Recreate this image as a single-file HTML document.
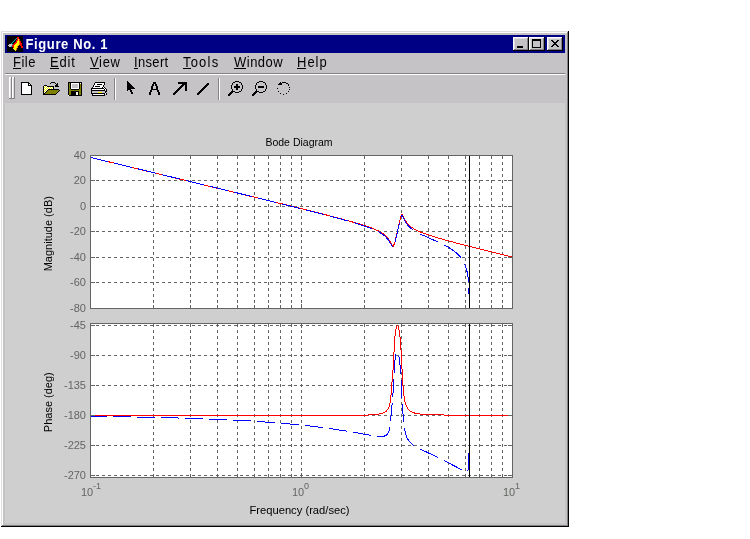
<!DOCTYPE html>
<html><head><meta charset="utf-8"><style>
html,body{margin:0;padding:0;background:#fff;width:750px;height:539px;overflow:hidden}
svg{position:absolute;left:0;top:0;will-change:transform}
text{font-family:"Liberation Sans",sans-serif}
</style></head><body>
<svg width="750" height="539" viewBox="0 0 750 539">
<g shape-rendering="crispEdges"><rect x="1" y="31" width="568" height="496" fill="#c6c3c6"/><rect x="2" y="32" width="566" height="1" fill="#ffffff"/><rect x="2" y="32" width="1" height="494" fill="#ffffff"/><rect x="1" y="31" width="567" height="1" fill="#dedfde"/><rect x="1" y="31" width="1" height="495" fill="#dedfde"/><rect x="2" y="525" width="566" height="1" fill="#848284"/><rect x="567" y="32" width="1" height="494" fill="#848284"/><rect x="1" y="526" width="568" height="1" fill="#000000"/><rect x="568" y="31" width="1" height="496" fill="#000000"/><rect x="5" y="35" width="560" height="18" fill="#000084"/><rect x="5" y="103" width="560" height="420" fill="#cecfce"/><rect x="5" y="73" width="560" height="1" fill="#848284"/><rect x="5" y="74" width="560" height="1" fill="#ffffff"/><rect x="7" y="36" width="16" height="16" fill="#000"/><rect x="17" y="37" width="2" height="1" fill="#ff0000"/><rect x="16" y="38" width="1" height="1" fill="#00a8a8"/><rect x="17" y="38" width="2" height="1" fill="#ff0000"/><rect x="15" y="39" width="1" height="1" fill="#00a8a8"/><rect x="17" y="39" width="1" height="1" fill="#ff0000"/><rect x="18" y="39" width="1" height="1" fill="#ffff00"/><rect x="19" y="39" width="1" height="1" fill="#ff0000"/><rect x="14" y="40" width="1" height="1" fill="#00a8a8"/><rect x="16" y="40" width="2" height="1" fill="#ff0000"/><rect x="18" y="40" width="1" height="1" fill="#ffff00"/><rect x="19" y="40" width="1" height="1" fill="#ff0000"/><rect x="13" y="41" width="1" height="1" fill="#00a8a8"/><rect x="16" y="41" width="1" height="1" fill="#ff0000"/><rect x="17" y="41" width="2" height="1" fill="#ffff00"/><rect x="19" y="41" width="1" height="1" fill="#ff8000"/><rect x="20" y="41" width="1" height="1" fill="#ff0000"/><rect x="12" y="42" width="1" height="1" fill="#00a8a8"/><rect x="15" y="42" width="2" height="1" fill="#ff0000"/><rect x="17" y="42" width="2" height="1" fill="#ffff00"/><rect x="19" y="42" width="1" height="1" fill="#ff8000"/><rect x="20" y="42" width="1" height="1" fill="#ff0000"/><rect x="11" y="43" width="1" height="1" fill="#00a8a8"/><rect x="14" y="43" width="2" height="1" fill="#ff0000"/><rect x="16" y="43" width="3" height="1" fill="#ffff00"/><rect x="19" y="43" width="1" height="1" fill="#ff8000"/><rect x="20" y="43" width="2" height="1" fill="#ff0000"/><rect x="9" y="44" width="3" height="1" fill="#c6c3c6"/><rect x="12" y="44" width="1" height="1" fill="#00a8a8"/><rect x="13" y="44" width="2" height="1" fill="#ff0000"/><rect x="15" y="44" width="4" height="1" fill="#ffff00"/><rect x="19" y="44" width="1" height="1" fill="#ff8000"/><rect x="20" y="44" width="2" height="1" fill="#ff0000"/><rect x="8" y="45" width="4" height="1" fill="#c6c3c6"/><rect x="12" y="45" width="2" height="1" fill="#ff0000"/><rect x="14" y="45" width="4" height="1" fill="#ffff00"/><rect x="18" y="45" width="1" height="1" fill="#ff8000"/><rect x="20" y="45" width="2" height="1" fill="#ff0000"/><rect x="9" y="46" width="2" height="1" fill="#c6c3c6"/><rect x="11" y="46" width="1" height="1" fill="#00a8a8"/><rect x="12" y="46" width="2" height="1" fill="#ff0000"/><rect x="14" y="46" width="3" height="1" fill="#ffff00"/><rect x="17" y="46" width="1" height="1" fill="#ff8000"/><rect x="21" y="46" width="2" height="1" fill="#ff0000"/><rect x="13" y="47" width="1" height="1" fill="#ff0000"/><rect x="14" y="47" width="3" height="1" fill="#ffff00"/><rect x="17" y="47" width="1" height="1" fill="#ff8000"/><rect x="21" y="47" width="2" height="1" fill="#ff0000"/><rect x="13" y="48" width="3" height="1" fill="#ffff00"/><rect x="16" y="48" width="1" height="1" fill="#ff8000"/><rect x="14" y="49" width="2" height="1" fill="#ffff00"/><rect x="16" y="49" width="1" height="1" fill="#ff8000"/><rect x="15" y="50" width="1" height="1" fill="#ffff00"/><text transform="translate(25.5,49) scale(1,1.06)" font-size="13" font-weight="bold" fill="#fff" letter-spacing="0.63">Figure No. 1</text><rect x="513" y="37" width="16" height="14" fill="#000"/><rect x="513" y="37" width="15" height="13" fill="#fff"/><rect x="514" y="38" width="14" height="12" fill="#848284"/><rect x="514" y="38" width="13" height="11" fill="#dedfde"/><rect x="515" y="39" width="12" height="10" fill="#c6c3c6"/><rect x="529" y="37" width="16" height="14" fill="#000"/><rect x="529" y="37" width="15" height="13" fill="#fff"/><rect x="530" y="38" width="14" height="12" fill="#848284"/><rect x="530" y="38" width="13" height="11" fill="#dedfde"/><rect x="531" y="39" width="12" height="10" fill="#c6c3c6"/><rect x="547" y="37" width="16" height="14" fill="#000"/><rect x="547" y="37" width="15" height="13" fill="#fff"/><rect x="548" y="38" width="14" height="12" fill="#848284"/><rect x="548" y="38" width="13" height="11" fill="#dedfde"/><rect x="549" y="39" width="12" height="10" fill="#c6c3c6"/><rect x="517" y="46" width="6" height="2" fill="#000"/><rect x="532" y="39" width="9" height="9" fill="#000"/><rect x="533" y="41" width="7" height="6" fill="#c6c3c6"/><rect x="551" y="40" width="2" height="1" fill="#000"/><rect x="557" y="40" width="2" height="1" fill="#000"/><rect x="552" y="41" width="2" height="1" fill="#000"/><rect x="556" y="41" width="2" height="1" fill="#000"/><rect x="553" y="42" width="4" height="1" fill="#000"/><rect x="554" y="43" width="2" height="1" fill="#000"/><rect x="553" y="44" width="4" height="1" fill="#000"/><rect x="552" y="45" width="2" height="1" fill="#000"/><rect x="556" y="45" width="2" height="1" fill="#000"/><rect x="551" y="46" width="2" height="1" fill="#000"/><rect x="557" y="46" width="2" height="1" fill="#000"/><text transform="translate(13,67) scale(1,1.1)" font-size="13" fill="#000" letter-spacing="0.5">File</text><rect x="13" y="68" width="8" height="1" fill="#000"/><text transform="translate(50,67) scale(1,1.1)" font-size="13" fill="#000" letter-spacing="0.8">Edit</text><rect x="50" y="68" width="9" height="1" fill="#000"/><text transform="translate(90,67) scale(1,1.1)" font-size="13" fill="#000" letter-spacing="0.67">View</text><rect x="90" y="68" width="9" height="1" fill="#000"/><text transform="translate(134,67) scale(1,1.1)" font-size="13" fill="#000" letter-spacing="0.34">Insert</text><rect x="134" y="68" width="4" height="1" fill="#000"/><text transform="translate(183,67) scale(1,1.1)" font-size="13" fill="#000" letter-spacing="1.2">Tools</text><rect x="183" y="68" width="8" height="1" fill="#000"/><text transform="translate(234,67) scale(1,1.1)" font-size="13" fill="#000" letter-spacing="0.5">Window</text><rect x="234" y="68" width="12" height="1" fill="#000"/><text transform="translate(297,67) scale(1,1.1)" font-size="13" fill="#000" letter-spacing="1.0">Help</text><rect x="297" y="68" width="9" height="1" fill="#000"/><rect x="9" y="77" width="3" height="22" fill="#848284"/><rect x="9" y="77" width="2" height="21" fill="#fff"/><rect x="10" y="78" width="1" height="20" fill="#dedfde"/><rect x="12" y="77" width="3" height="22" fill="#848284"/><rect x="12" y="77" width="2" height="21" fill="#fff"/><rect x="13" y="78" width="1" height="20" fill="#dedfde"/><rect x="114" y="78" width="1" height="22" fill="#848284"/><rect x="115" y="78" width="1" height="22" fill="#fff"/><rect x="218" y="78" width="1" height="22" fill="#848284"/><rect x="219" y="78" width="1" height="22" fill="#fff"/><rect x="21" y="82" width="8" height="1" fill="#000"/><rect x="21" y="83" width="1" height="1" fill="#000"/><rect x="22" y="83" width="6" height="1" fill="#fff"/><rect x="28" y="83" width="2" height="1" fill="#000"/><rect x="21" y="84" width="1" height="1" fill="#000"/><rect x="22" y="84" width="6" height="1" fill="#fff"/><rect x="28" y="84" width="1" height="1" fill="#000"/><rect x="29" y="84" width="1" height="1" fill="#fff"/><rect x="30" y="84" width="1" height="1" fill="#000"/><rect x="21" y="85" width="1" height="1" fill="#000"/><rect x="22" y="85" width="6" height="1" fill="#fff"/><rect x="28" y="85" width="4" height="1" fill="#000"/><rect x="21" y="86" width="1" height="1" fill="#000"/><rect x="22" y="86" width="9" height="1" fill="#fff"/><rect x="31" y="86" width="1" height="1" fill="#000"/><rect x="21" y="87" width="1" height="1" fill="#000"/><rect x="22" y="87" width="9" height="1" fill="#fff"/><rect x="31" y="87" width="1" height="1" fill="#000"/><rect x="21" y="88" width="1" height="1" fill="#000"/><rect x="22" y="88" width="9" height="1" fill="#fff"/><rect x="31" y="88" width="1" height="1" fill="#000"/><rect x="21" y="89" width="1" height="1" fill="#000"/><rect x="22" y="89" width="9" height="1" fill="#fff"/><rect x="31" y="89" width="1" height="1" fill="#000"/><rect x="21" y="90" width="1" height="1" fill="#000"/><rect x="22" y="90" width="9" height="1" fill="#fff"/><rect x="31" y="90" width="1" height="1" fill="#000"/><rect x="21" y="91" width="1" height="1" fill="#000"/><rect x="22" y="91" width="9" height="1" fill="#fff"/><rect x="31" y="91" width="1" height="1" fill="#000"/><rect x="21" y="92" width="1" height="1" fill="#000"/><rect x="22" y="92" width="9" height="1" fill="#fff"/><rect x="31" y="92" width="1" height="1" fill="#000"/><rect x="21" y="93" width="1" height="1" fill="#000"/><rect x="22" y="93" width="9" height="1" fill="#fff"/><rect x="31" y="93" width="1" height="1" fill="#000"/><rect x="21" y="94" width="11" height="1" fill="#000"/><rect x="51" y="82" width="4" height="1" fill="#000"/><rect x="50" y="83" width="1" height="1" fill="#000"/><rect x="55" y="83" width="1" height="1" fill="#000"/><rect x="57" y="83" width="1" height="1" fill="#000"/><rect x="56" y="84" width="2" height="1" fill="#000"/><rect x="44" y="85" width="3" height="1" fill="#000"/><rect x="55" y="85" width="3" height="1" fill="#000"/><rect x="43" y="86" width="1" height="1" fill="#000"/><rect x="44" y="86" width="1" height="1" fill="#fff"/><rect x="45" y="86" width="1" height="1" fill="#ffff00"/><rect x="46" y="86" width="1" height="1" fill="#fff"/><rect x="47" y="86" width="7" height="1" fill="#000"/><rect x="55" y="86" width="4" height="1" fill="#000"/><rect x="43" y="87" width="1" height="1" fill="#000"/><rect x="44" y="87" width="1" height="1" fill="#ffff00"/><rect x="45" y="87" width="1" height="1" fill="#fff"/><rect x="46" y="87" width="1" height="1" fill="#ffff00"/><rect x="47" y="87" width="1" height="1" fill="#fff"/><rect x="48" y="87" width="1" height="1" fill="#ffff00"/><rect x="49" y="87" width="1" height="1" fill="#fff"/><rect x="50" y="87" width="1" height="1" fill="#ffff00"/><rect x="51" y="87" width="1" height="1" fill="#fff"/><rect x="52" y="87" width="1" height="1" fill="#ffff00"/><rect x="53" y="87" width="1" height="1" fill="#000"/><rect x="43" y="88" width="1" height="1" fill="#000"/><rect x="44" y="88" width="1" height="1" fill="#fff"/><rect x="45" y="88" width="1" height="1" fill="#ffff00"/><rect x="46" y="88" width="1" height="1" fill="#fff"/><rect x="47" y="88" width="1" height="1" fill="#ffff00"/><rect x="48" y="88" width="1" height="1" fill="#fff"/><rect x="49" y="88" width="1" height="1" fill="#ffff00"/><rect x="50" y="88" width="1" height="1" fill="#fff"/><rect x="51" y="88" width="1" height="1" fill="#ffff00"/><rect x="52" y="88" width="1" height="1" fill="#fff"/><rect x="53" y="88" width="1" height="1" fill="#000"/><rect x="43" y="89" width="1" height="1" fill="#000"/><rect x="44" y="89" width="1" height="1" fill="#ffff00"/><rect x="45" y="89" width="1" height="1" fill="#fff"/><rect x="46" y="89" width="1" height="1" fill="#ffff00"/><rect x="47" y="89" width="1" height="1" fill="#fff"/><rect x="48" y="89" width="11" height="1" fill="#000"/><rect x="43" y="90" width="1" height="1" fill="#000"/><rect x="44" y="90" width="1" height="1" fill="#fff"/><rect x="45" y="90" width="1" height="1" fill="#ffff00"/><rect x="46" y="90" width="1" height="1" fill="#fff"/><rect x="47" y="90" width="1" height="1" fill="#000"/><rect x="48" y="90" width="11" height="1" fill="#808000"/><rect x="59" y="90" width="1" height="1" fill="#000"/><rect x="43" y="91" width="1" height="1" fill="#000"/><rect x="44" y="91" width="1" height="1" fill="#ffff00"/><rect x="45" y="91" width="1" height="1" fill="#fff"/><rect x="46" y="91" width="1" height="1" fill="#000"/><rect x="47" y="91" width="11" height="1" fill="#808000"/><rect x="58" y="91" width="1" height="1" fill="#000"/><rect x="43" y="92" width="1" height="1" fill="#000"/><rect x="44" y="92" width="1" height="1" fill="#fff"/><rect x="45" y="92" width="1" height="1" fill="#000"/><rect x="46" y="92" width="11" height="1" fill="#808000"/><rect x="57" y="92" width="1" height="1" fill="#000"/><rect x="43" y="93" width="2" height="1" fill="#000"/><rect x="45" y="93" width="11" height="1" fill="#808000"/><rect x="56" y="93" width="1" height="1" fill="#000"/><rect x="43" y="94" width="13" height="1" fill="#000"/><rect x="68" y="82" width="14" height="1" fill="#000"/><rect x="68" y="83" width="1" height="1" fill="#000"/><rect x="69" y="83" width="1" height="1" fill="#808000"/><rect x="70" y="83" width="1" height="1" fill="#000"/><rect x="71" y="83" width="8" height="1" fill="#fff"/><rect x="79" y="83" width="1" height="1" fill="#000"/><rect x="80" y="83" width="1" height="1" fill="#fff"/><rect x="81" y="83" width="1" height="1" fill="#000"/><rect x="68" y="84" width="1" height="1" fill="#000"/><rect x="69" y="84" width="1" height="1" fill="#808000"/><rect x="70" y="84" width="1" height="1" fill="#000"/><rect x="71" y="84" width="1" height="1" fill="#fff"/><rect x="72" y="84" width="6" height="1" fill="#c6c3c6"/><rect x="78" y="84" width="1" height="1" fill="#fff"/><rect x="79" y="84" width="1" height="1" fill="#000"/><rect x="80" y="84" width="1" height="1" fill="#808000"/><rect x="81" y="84" width="1" height="1" fill="#000"/><rect x="68" y="85" width="1" height="1" fill="#000"/><rect x="69" y="85" width="1" height="1" fill="#808000"/><rect x="70" y="85" width="1" height="1" fill="#000"/><rect x="71" y="85" width="1" height="1" fill="#fff"/><rect x="72" y="85" width="6" height="1" fill="#c6c3c6"/><rect x="78" y="85" width="1" height="1" fill="#fff"/><rect x="79" y="85" width="1" height="1" fill="#000"/><rect x="80" y="85" width="1" height="1" fill="#808000"/><rect x="81" y="85" width="1" height="1" fill="#000"/><rect x="68" y="86" width="1" height="1" fill="#000"/><rect x="69" y="86" width="1" height="1" fill="#808000"/><rect x="70" y="86" width="1" height="1" fill="#000"/><rect x="71" y="86" width="1" height="1" fill="#fff"/><rect x="72" y="86" width="6" height="1" fill="#c6c3c6"/><rect x="78" y="86" width="1" height="1" fill="#fff"/><rect x="79" y="86" width="1" height="1" fill="#000"/><rect x="80" y="86" width="1" height="1" fill="#808000"/><rect x="81" y="86" width="1" height="1" fill="#000"/><rect x="68" y="87" width="1" height="1" fill="#000"/><rect x="69" y="87" width="1" height="1" fill="#808000"/><rect x="70" y="87" width="1" height="1" fill="#000"/><rect x="71" y="87" width="1" height="1" fill="#fff"/><rect x="72" y="87" width="6" height="1" fill="#c6c3c6"/><rect x="78" y="87" width="1" height="1" fill="#fff"/><rect x="79" y="87" width="1" height="1" fill="#000"/><rect x="80" y="87" width="1" height="1" fill="#808000"/><rect x="81" y="87" width="1" height="1" fill="#000"/><rect x="68" y="88" width="1" height="1" fill="#000"/><rect x="69" y="88" width="1" height="1" fill="#808000"/><rect x="70" y="88" width="1" height="1" fill="#000"/><rect x="71" y="88" width="8" height="1" fill="#fff"/><rect x="79" y="88" width="1" height="1" fill="#000"/><rect x="80" y="88" width="1" height="1" fill="#808000"/><rect x="81" y="88" width="1" height="1" fill="#000"/><rect x="68" y="89" width="1" height="1" fill="#000"/><rect x="69" y="89" width="2" height="1" fill="#808000"/><rect x="71" y="89" width="8" height="1" fill="#000"/><rect x="79" y="89" width="2" height="1" fill="#808000"/><rect x="81" y="89" width="1" height="1" fill="#000"/><rect x="68" y="90" width="1" height="1" fill="#000"/><rect x="69" y="90" width="12" height="1" fill="#808000"/><rect x="81" y="90" width="1" height="1" fill="#000"/><rect x="68" y="91" width="1" height="1" fill="#000"/><rect x="69" y="91" width="2" height="1" fill="#808000"/><rect x="71" y="91" width="8" height="1" fill="#000"/><rect x="79" y="91" width="2" height="1" fill="#808000"/><rect x="81" y="91" width="1" height="1" fill="#000"/><rect x="68" y="92" width="1" height="1" fill="#000"/><rect x="69" y="92" width="2" height="1" fill="#808000"/><rect x="71" y="92" width="5" height="1" fill="#000"/><rect x="76" y="92" width="2" height="1" fill="#fff"/><rect x="78" y="92" width="1" height="1" fill="#000"/><rect x="79" y="92" width="2" height="1" fill="#808000"/><rect x="81" y="92" width="1" height="1" fill="#000"/><rect x="68" y="93" width="1" height="1" fill="#000"/><rect x="69" y="93" width="2" height="1" fill="#808000"/><rect x="71" y="93" width="5" height="1" fill="#000"/><rect x="76" y="93" width="2" height="1" fill="#fff"/><rect x="78" y="93" width="1" height="1" fill="#000"/><rect x="79" y="93" width="2" height="1" fill="#808000"/><rect x="81" y="93" width="1" height="1" fill="#000"/><rect x="68" y="94" width="1" height="1" fill="#000"/><rect x="69" y="94" width="2" height="1" fill="#808000"/><rect x="71" y="94" width="5" height="1" fill="#000"/><rect x="76" y="94" width="2" height="1" fill="#fff"/><rect x="78" y="94" width="1" height="1" fill="#000"/><rect x="79" y="94" width="2" height="1" fill="#808000"/><rect x="81" y="94" width="1" height="1" fill="#000"/><rect x="68" y="95" width="1" height="1" fill="#fff"/><rect x="69" y="95" width="13" height="1" fill="#000"/><rect x="95" y="82" width="10" height="1" fill="#000"/><rect x="94" y="83" width="1" height="1" fill="#000"/><rect x="95" y="83" width="9" height="1" fill="#fff"/><rect x="104" y="83" width="1" height="1" fill="#000"/><rect x="94" y="84" width="1" height="1" fill="#000"/><rect x="95" y="84" width="2" height="1" fill="#fff"/><rect x="97" y="84" width="5" height="1" fill="#000"/><rect x="102" y="84" width="2" height="1" fill="#fff"/><rect x="104" y="84" width="1" height="1" fill="#000"/><rect x="93" y="85" width="1" height="1" fill="#000"/><rect x="94" y="85" width="9" height="1" fill="#fff"/><rect x="103" y="85" width="1" height="1" fill="#000"/><rect x="93" y="86" width="1" height="1" fill="#000"/><rect x="94" y="86" width="1" height="1" fill="#fff"/><rect x="95" y="86" width="5" height="1" fill="#000"/><rect x="100" y="86" width="3" height="1" fill="#fff"/><rect x="103" y="86" width="1" height="1" fill="#000"/><rect x="92" y="87" width="1" height="1" fill="#000"/><rect x="93" y="87" width="9" height="1" fill="#fff"/><rect x="102" y="87" width="1" height="1" fill="#000"/><rect x="103" y="87" width="1" height="1" fill="#fff"/><rect x="104" y="87" width="1" height="1" fill="#000"/><rect x="91" y="88" width="13" height="1" fill="#000"/><rect x="104" y="88" width="1" height="1" fill="#fff"/><rect x="105" y="88" width="1" height="1" fill="#000"/><rect x="91" y="89" width="1" height="1" fill="#000"/><rect x="92" y="89" width="12" height="1" fill="#fff"/><rect x="104" y="89" width="1" height="1" fill="#000"/><rect x="105" y="89" width="1" height="1" fill="#fff"/><rect x="106" y="89" width="1" height="1" fill="#000"/><rect x="91" y="90" width="14" height="1" fill="#000"/><rect x="105" y="90" width="1" height="1" fill="#c6c3c6"/><rect x="106" y="90" width="1" height="1" fill="#000"/><rect x="91" y="91" width="1" height="1" fill="#000"/><rect x="92" y="91" width="13" height="1" fill="#c6c3c6"/><rect x="105" y="91" width="2" height="1" fill="#000"/><rect x="91" y="92" width="1" height="1" fill="#000"/><rect x="92" y="92" width="6" height="1" fill="#c6c3c6"/><rect x="98" y="92" width="4" height="1" fill="#ffff00"/><rect x="102" y="92" width="3" height="1" fill="#c6c3c6"/><rect x="105" y="92" width="1" height="1" fill="#000"/><rect x="91" y="93" width="14" height="1" fill="#000"/><rect x="105" y="93" width="1" height="1" fill="#fff"/><rect x="106" y="93" width="1" height="1" fill="#000"/><rect x="92" y="94" width="1" height="1" fill="#000"/><rect x="93" y="94" width="11" height="1" fill="#fff"/><rect x="104" y="94" width="1" height="1" fill="#000"/><rect x="106" y="94" width="1" height="1" fill="#000"/><rect x="92" y="95" width="13" height="1" fill="#000"/><rect x="127" y="81" width="1" height="1" fill="#000"/><rect x="127" y="82" width="2" height="1" fill="#000"/><rect x="127" y="83" width="3" height="1" fill="#000"/><rect x="127" y="84" width="4" height="1" fill="#000"/><rect x="127" y="85" width="5" height="1" fill="#000"/><rect x="127" y="86" width="6" height="1" fill="#000"/><rect x="127" y="87" width="7" height="1" fill="#000"/><rect x="127" y="88" width="8" height="1" fill="#000"/><rect x="127" y="89" width="4" height="1" fill="#000"/><rect x="127" y="90" width="1" height="1" fill="#000"/><rect x="130" y="90" width="2" height="1" fill="#000"/><rect x="130" y="91" width="2" height="1" fill="#000"/><rect x="131" y="92" width="2" height="1" fill="#000"/><rect x="131" y="93" width="2" height="1" fill="#000"/><rect x="153" y="82" width="3" height="1" fill="#000"/><rect x="153" y="83" width="3" height="1" fill="#000"/><rect x="152" y="84" width="2" height="1" fill="#000"/><rect x="155" y="84" width="2" height="1" fill="#000"/><rect x="152" y="85" width="2" height="1" fill="#000"/><rect x="155" y="85" width="2" height="1" fill="#000"/><rect x="151" y="86" width="2" height="1" fill="#000"/><rect x="156" y="86" width="2" height="1" fill="#000"/><rect x="151" y="87" width="2" height="1" fill="#000"/><rect x="156" y="87" width="2" height="1" fill="#000"/><rect x="151" y="88" width="2" height="1" fill="#000"/><rect x="156" y="88" width="2" height="1" fill="#000"/><rect x="151" y="89" width="7" height="1" fill="#000"/><rect x="150" y="90" width="2" height="1" fill="#000"/><rect x="157" y="90" width="2" height="1" fill="#000"/><rect x="150" y="91" width="2" height="1" fill="#000"/><rect x="157" y="91" width="2" height="1" fill="#000"/><rect x="149" y="92" width="2" height="1" fill="#000"/><rect x="158" y="92" width="2" height="1" fill="#000"/><rect x="149" y="93" width="2" height="1" fill="#000"/><rect x="158" y="93" width="2" height="1" fill="#000"/><rect x="149" y="94" width="2" height="1" fill="#000"/><rect x="158" y="94" width="2" height="1" fill="#000"/><path d="M174 94L184 84" stroke="#000" stroke-width="2.4" stroke-linecap="square"/><path d="M178 83H186V91" stroke="#000" stroke-width="2.2" fill="none" stroke-linecap="butt"/><path d="M198 94L208 84" stroke="#000" stroke-width="2.4" stroke-linecap="round"/><rect x="235" y="81" width="4" height="1" fill="#000"/><rect x="233" y="82" width="2" height="1" fill="#000"/><rect x="239" y="82" width="2" height="1" fill="#000"/><rect x="232" y="83" width="1" height="1" fill="#000"/><rect x="241" y="83" width="1" height="1" fill="#000"/><rect x="232" y="84" width="1" height="1" fill="#000"/><rect x="236" y="84" width="2" height="1" fill="#000"/><rect x="241" y="84" width="1" height="1" fill="#000"/><rect x="231" y="85" width="1" height="1" fill="#000"/><rect x="236" y="85" width="2" height="1" fill="#000"/><rect x="242" y="85" width="1" height="1" fill="#000"/><rect x="231" y="86" width="1" height="1" fill="#000"/><rect x="234" y="86" width="6" height="1" fill="#000"/><rect x="242" y="86" width="1" height="1" fill="#000"/><rect x="231" y="87" width="1" height="1" fill="#000"/><rect x="234" y="87" width="6" height="1" fill="#000"/><rect x="242" y="87" width="1" height="1" fill="#000"/><rect x="231" y="88" width="1" height="1" fill="#000"/><rect x="236" y="88" width="2" height="1" fill="#000"/><rect x="242" y="88" width="1" height="1" fill="#000"/><rect x="232" y="89" width="1" height="1" fill="#000"/><rect x="236" y="89" width="2" height="1" fill="#000"/><rect x="241" y="89" width="1" height="1" fill="#000"/><rect x="232" y="90" width="1" height="1" fill="#000"/><rect x="241" y="90" width="1" height="1" fill="#000"/><rect x="231" y="91" width="4" height="1" fill="#000"/><rect x="239" y="91" width="2" height="1" fill="#000"/><rect x="230" y="92" width="3" height="1" fill="#000"/><rect x="235" y="92" width="4" height="1" fill="#000"/><rect x="229" y="93" width="3" height="1" fill="#000"/><rect x="228" y="94" width="3" height="1" fill="#000"/><rect x="228" y="95" width="2" height="1" fill="#000"/><rect x="259" y="81" width="4" height="1" fill="#000"/><rect x="257" y="82" width="2" height="1" fill="#000"/><rect x="263" y="82" width="2" height="1" fill="#000"/><rect x="256" y="83" width="1" height="1" fill="#000"/><rect x="265" y="83" width="1" height="1" fill="#000"/><rect x="256" y="84" width="1" height="1" fill="#000"/><rect x="265" y="84" width="1" height="1" fill="#000"/><rect x="255" y="85" width="1" height="1" fill="#000"/><rect x="266" y="85" width="1" height="1" fill="#000"/><rect x="255" y="86" width="1" height="1" fill="#000"/><rect x="258" y="86" width="6" height="1" fill="#000"/><rect x="266" y="86" width="1" height="1" fill="#000"/><rect x="255" y="87" width="1" height="1" fill="#000"/><rect x="258" y="87" width="6" height="1" fill="#000"/><rect x="266" y="87" width="1" height="1" fill="#000"/><rect x="255" y="88" width="1" height="1" fill="#000"/><rect x="266" y="88" width="1" height="1" fill="#000"/><rect x="256" y="89" width="1" height="1" fill="#000"/><rect x="265" y="89" width="1" height="1" fill="#000"/><rect x="256" y="90" width="1" height="1" fill="#000"/><rect x="265" y="90" width="1" height="1" fill="#000"/><rect x="255" y="91" width="4" height="1" fill="#000"/><rect x="263" y="91" width="2" height="1" fill="#000"/><rect x="254" y="92" width="3" height="1" fill="#000"/><rect x="259" y="92" width="4" height="1" fill="#000"/><rect x="253" y="93" width="3" height="1" fill="#000"/><rect x="252" y="94" width="3" height="1" fill="#000"/><rect x="252" y="95" width="2" height="1" fill="#000"/><rect x="280" y="82" width="1" height="1" fill="#000"/><rect x="282" y="82" width="4" height="1" fill="#000"/><rect x="279" y="83" width="3" height="1" fill="#000"/><rect x="286" y="83" width="2" height="1" fill="#000"/><rect x="278" y="84" width="4" height="1" fill="#000"/><rect x="288" y="84" width="1" height="1" fill="#000"/><rect x="288" y="85" width="1" height="1" fill="#000"/><rect x="289" y="87" width="1" height="1" fill="#000"/><rect x="277" y="88" width="1" height="1" fill="#000"/><rect x="289" y="89" width="1" height="1" fill="#000"/><rect x="278" y="91" width="1" height="1" fill="#000"/><rect x="288" y="91" width="1" height="1" fill="#000"/><rect x="280" y="93" width="1" height="1" fill="#000"/><rect x="286" y="93" width="1" height="1" fill="#000"/><rect x="283" y="94" width="1" height="1" fill="#000"/></g>
<rect x="90" y="155" width="423" height="154" fill="#ffffff"/><rect x="90" y="323" width="423" height="155" fill="#ffffff"/><path d="M153.5 156V308M153.5 324V477M190.5 156V308M190.5 324V477M217.5 156V308M217.5 324V477M237.5 156V308M237.5 324V477M254.5 156V308M254.5 324V477M268.5 156V308M268.5 324V477M280.5 156V308M280.5 324V477M291.5 156V308M291.5 324V477M364.5 156V308M364.5 324V477M401.5 156V308M401.5 324V477M428.5 156V308M428.5 324V477M448.5 156V308M448.5 324V477M465.5 156V308M465.5 324V477M479.5 156V308M479.5 324V477M491.5 156V308M491.5 324V477M502.5 156V308M502.5 324V477M301.5 156V308M301.5 324V477M90 180.5H512M90 206.5H512M90 231.5H512M90 257.5H512M90 282.5H512M90 325.5H512M90 355.5H512M90 385.5H512M90 415.5H512M90 445.5H512M90 475.5H512" stroke="#636563" stroke-width="1" stroke-dasharray="3 3" fill="none" shape-rendering="crispEdges"/><clipPath id="cm"><rect x="90" y="155" width="423" height="154"/></clipPath><clipPath id="cp"><rect x="90" y="323" width="423" height="155"/></clipPath><g clip-path="url(#cm)"><polyline points="90.00,157.27 291.58,206.22 331.60,216.30 356.80,223.17 365.70,225.93 373.11,228.59 377.55,230.51 382.00,232.94 385.16,235.30 387.67,237.93 389.18,240.12 393.06,246.92 394.85,242.55 400.74,216.88 401.40,214.97 402.01,214.40 402.77,215.20 404.80,219.43 406.19,221.81 407.74,223.85 409.55,225.68 411.86,227.50 414.63,229.23 418.11,230.98 422.58,232.86 434.01,236.74 450.90,241.57 475.24,247.91 512.00,257.07" fill="none" stroke="#ff0000" stroke-width="1" stroke-linejoin="round" shape-rendering="crispEdges"/><path d="M90.00 157.27 L108.00 161.63M114.00 163.08 L132.00 167.43M138.00 168.88 L156.00 173.24M162.00 174.69 L180.00 179.05M186.00 180.50 L204.00 184.87M210.00 186.32 L228.00 190.70M234.00 192.16 L252.00 196.55M258.00 198.02 L276.00 202.45M282.00 203.93 L300.00 208.42M306.00 209.93 L324.00 214.54M330.00 216.11 L348.00 221.03M354.00 222.77 L364.21 225.98 L372.00 228.82M378.00 231.52 L382.00 233.85 L384.97 236.14 L386.16 237.31 L388.26 239.93 L392.80 247.13M395.20 241.48 L399.39 223.48M400.86 217.48 L401.60 215.72 L401.95 215.49 L402.33 215.69 L405.29 221.61 L407.22 224.59 L409.98 227.57 L413.56 230.32M419.56 233.73 L437.56 241.83M443.56 244.69 L449.44 247.92 L454.13 251.05 L457.98 254.33 L461.14 257.91M464.63 263.91 L466.04 267.72 L467.07 271.71 L467.92 276.59 L468.50 281.91M468.87 287.91 L468.90 293.83" fill="none" stroke="#0000ff" stroke-width="1" stroke-linejoin="round" shape-rendering="crispEdges"/></g><g clip-path="url(#cp)"><polyline points="90.00,415.50 349.39,415.37 362.73,415.19 371.63,414.87 377.55,414.35 382.00,413.43 383.48,412.89 385.23,411.93 386.47,410.92 387.53,409.66 388.43,408.14 389.21,406.30 390.46,401.44 393.06,369.45 394.87,336.94 395.41,332.14 396.02,328.67 396.69,326.54 397.05,326.01 397.41,325.83 397.79,326.02 398.16,326.57 398.86,328.77 399.50,332.34 400.08,337.38 400.94,349.14 402.77,382.76 403.42,390.81 404.14,396.91 405.09,402.09 406.28,405.93 407.80,408.78 409.77,410.86 412.47,412.39 416.12,413.47 421.09,414.20 428.54,414.70 453.88,415.21 512.00,415.41" fill="none" stroke="#ff0000" stroke-width="1" stroke-linejoin="round" shape-rendering="crispEdges"/><path d="M90.00 416.45 L107.00 416.65M113.00 416.73 L131.00 416.99M137.00 417.09 L155.00 417.44M161.00 417.57 L179.00 418.02M185.00 418.19 L203.00 418.78M209.00 419.00 L227.00 419.76M233.00 420.05 L251.00 421.03M257.00 421.41 L275.00 422.68M281.00 423.17 L299.00 424.83M305.00 425.46 L323.00 427.60M329.00 428.41 L347.00 431.16M353.00 432.18 L371.00 435.40M377.00 436.28 L380.52 436.53 L383.48 436.32 L385.06 435.85 L386.39 435.10 L387.78 433.67 L388.91 431.62 L389.80 428.97 L390.02 426.58M390.57 420.58 L392.22 402.58M392.77 396.58 L393.90 378.58M394.25 372.58 L394.97 360.57 L395.98 354.58M398.83 355.98 L399.85 362.94 L400.73 373.98M401.09 379.98 L402.00 397.98M402.31 403.98 L403.63 421.98M404.40 427.98 L405.74 434.25 L406.57 436.71 L407.55 438.83 L408.69 440.69 L410.06 442.37 L411.69 443.91 L413.65 445.39M419.65 448.82 L437.65 457.31M443.65 460.26 L461.65 469.79M467.65 471.10 L468.39 469.30 L468.86 465.17 L468.90 453.10" fill="none" stroke="#0000ff" stroke-width="1" stroke-linejoin="round" shape-rendering="crispEdges"/></g><path d="M469.5 155V309M469.5 323V478" stroke="#000" stroke-width="1" shape-rendering="crispEdges"/><rect x="90.5" y="155.5" width="422" height="153" fill="none" stroke="#636563" stroke-width="1" shape-rendering="crispEdges"/><rect x="90.5" y="323.5" width="422" height="154" fill="none" stroke="#636563" stroke-width="1" shape-rendering="crispEdges"/><path d="M90 180.5h5M513 180.5h-5M90 206.5h5M513 206.5h-5M90 231.5h5M513 231.5h-5M90 257.5h5M513 257.5h-5M90 282.5h5M513 282.5h-5M90 325.5h5M513 325.5h-5M90 355.5h5M513 355.5h-5M90 385.5h5M513 385.5h-5M90 415.5h5M513 415.5h-5M90 445.5h5M513 445.5h-5M90 475.5h5M513 475.5h-5M153.5 155v4M153.5 309v-4M190.5 155v4M190.5 309v-4M217.5 155v4M217.5 309v-4M237.5 155v4M237.5 309v-4M254.5 155v4M254.5 309v-4M268.5 155v4M268.5 309v-4M280.5 155v4M280.5 309v-4M291.5 155v4M291.5 309v-4M364.5 155v4M364.5 309v-4M401.5 155v4M401.5 309v-4M428.5 155v4M428.5 309v-4M448.5 155v4M448.5 309v-4M465.5 155v4M465.5 309v-4M479.5 155v4M479.5 309v-4M491.5 155v4M491.5 309v-4M502.5 155v4M502.5 309v-4M301.5 155v5M301.5 309v-5M153.5 323v4M153.5 478v-4M190.5 323v4M190.5 478v-4M217.5 323v4M217.5 478v-4M237.5 323v4M237.5 478v-4M254.5 323v4M254.5 478v-4M268.5 323v4M268.5 478v-4M280.5 323v4M280.5 478v-4M291.5 323v4M291.5 478v-4M364.5 323v4M364.5 478v-4M401.5 323v4M401.5 478v-4M428.5 323v4M428.5 478v-4M448.5 323v4M448.5 478v-4M465.5 323v4M465.5 478v-4M479.5 323v4M479.5 478v-4M491.5 323v4M491.5 478v-4M502.5 323v4M502.5 478v-4M301.5 323v5M301.5 478v-5" stroke="#636563" stroke-width="1" fill="none" shape-rendering="crispEdges"/><text x="86" y="158.5" font-size="11" text-anchor="end" fill="#636563">40</text><text x="86" y="184.0" font-size="11" text-anchor="end" fill="#636563">20</text><text x="86" y="209.5" font-size="11" text-anchor="end" fill="#636563">0</text><text x="86" y="235.0" font-size="11" text-anchor="end" fill="#636563">-20</text><text x="86" y="260.5" font-size="11" text-anchor="end" fill="#636563">-40</text><text x="86" y="286.0" font-size="11" text-anchor="end" fill="#636563">-60</text><text x="86" y="311.5" font-size="11" text-anchor="end" fill="#636563">-80</text><text x="86" y="328.5" font-size="11" text-anchor="end" fill="#636563">-45</text><text x="86" y="358.5" font-size="11" text-anchor="end" fill="#636563">-90</text><text x="86" y="388.5" font-size="11" text-anchor="end" fill="#636563">-135</text><text x="86" y="418.5" font-size="11" text-anchor="end" fill="#636563">-180</text><text x="86" y="448.5" font-size="11" text-anchor="end" fill="#636563">-225</text><text x="86" y="478.5" font-size="11" text-anchor="end" fill="#636563">-270</text><text x="81" y="496" font-size="11" text-anchor="start" fill="#636563">10</text><text x="93" y="488.5" font-size="9" text-anchor="start" fill="#636563">-1</text><text x="292" y="496" font-size="11" text-anchor="start" fill="#636563">10</text><text x="304" y="488.5" font-size="9" text-anchor="start" fill="#636563">0</text><text x="503" y="496" font-size="11" text-anchor="start" fill="#636563">10</text><text x="515" y="488.5" font-size="9" text-anchor="start" fill="#636563">1</text><text x="299" y="146" font-size="10.5" text-anchor="middle" fill="#000">Bode Diagram</text><text x="299.5" y="514" font-size="11.2" text-anchor="middle" fill="#000">Frequency (rad/sec)</text><text transform="translate(52,233.7) rotate(-90)" font-size="11" text-anchor="middle" fill="#000">Magnitude (dB)</text><text transform="translate(52,402.2) rotate(-90)" font-size="11" text-anchor="middle" fill="#000">Phase (deg)</text>
</svg>
</body></html>
